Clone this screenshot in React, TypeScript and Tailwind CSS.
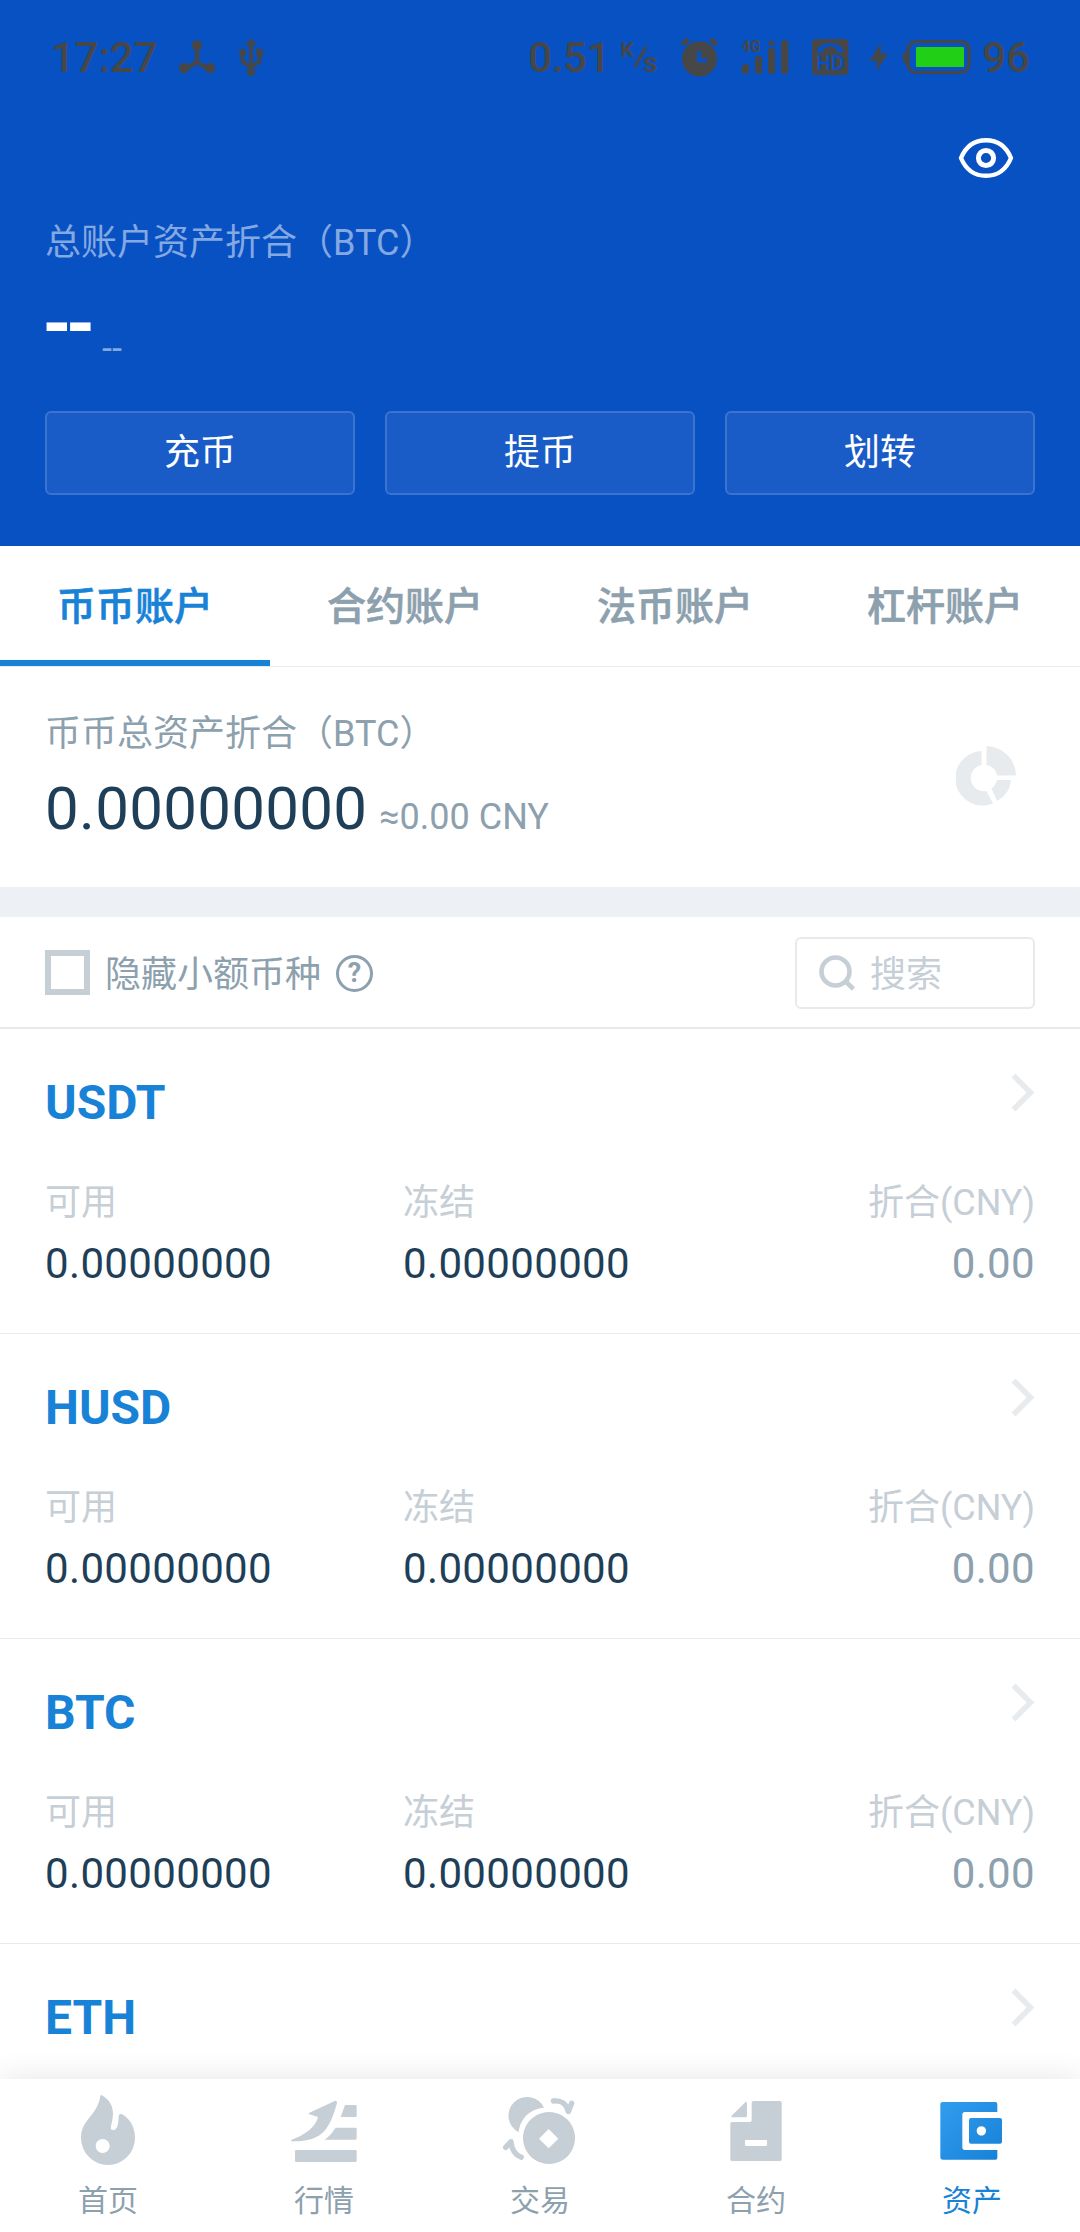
import type { ReactNode } from "react";

const INK = "#474747";

function StatusBar() {
  return (
    <div className="flex h-[116px] items-center pl-[51px] pr-[50px] text-[42px] leading-[48px] font-medium text-[#474747]">
      <span className="w-[126px]">17:27</span>
      <svg width="40" height="44" viewBox="177 36 40 44" fill={INK}>
        <path d="M197 46V62L184 70M197 62L210 70" stroke={INK} strokeWidth="4.2" fill="none" />
        <circle cx="197" cy="45.2" r="5.2" />
        <circle cx="184.2" cy="68" r="5.2" />
        <circle cx="210" cy="68" r="5.2" />
      </svg>
      <svg className="ml-[19px]" width="30" height="44" viewBox="236 36 30 44" fill={INK}>
        <path d="M251 38l6 7.500h-12z" />
        <path d="M251 42V72M242.500 53v8.500l8.500 6M259.500 53v8.500l-8.500 6" stroke={INK} strokeWidth="3.700" fill="none" />
        <circle cx="242.500" cy="52.500" r="3.600" />
        <path d="M256 49h7v6.500h-7z" />
        <circle cx="251" cy="72" r="4" />
      </svg>

      <span className="ml-auto tracking-[-0.3px]">0.51</span>
      <svg className="ml-[10px]" width="40" height="44" viewBox="620 36 40 44" fill={INK}>
        <text x="620.500" y="56.500" fontSize="21" fontWeight="700">K</text>
        <path d="M635 67L646 46.500" stroke={INK} strokeWidth="3" />
        <text x="643" y="72" fontSize="28" fontWeight="600">s</text>
      </svg>
      <svg className="ml-[19px]" width="40" height="44" viewBox="679 36 40 44" fill={INK}>
        <circle cx="699.500" cy="59" r="17.500" />
        <path d="M682.500 44.500l6-5M716.500 44.500l-6-5" stroke={INK} strokeWidth="5" />
        <path d="M699 51v9.500h8" stroke="#0851c3" strokeWidth="4" fill="none" />
      </svg>
      <svg className="ml-[21px]" width="50" height="44" viewBox="740 36 50 44" fill={INK}>
        <text x="741.500" y="52" fontSize="17" fontWeight="700" textLength="19" lengthAdjust="spacingAndGlyphs">4G</text>
        <rect x="741.700" y="64" width="7.400" height="10" rx="3.700" />
        <rect x="755" y="56" width="7" height="18" rx="3" />
        <rect x="768" y="48" width="7.200" height="26" rx="3" />
        <path d="M771.500 39l4 6.500h-8z" />
        <rect x="781" y="40" width="7.400" height="34" rx="3.500" />
      </svg>
      <svg className="ml-[21px]" width="38" height="44" viewBox="811 36 38 44" fill={INK}>
        <rect x="812" y="39" width="36.500" height="36" rx="4" />
        <path d="M817 50C820 41 840 41 843 50L842 53L837 52L836 48Q830 45 824 48L823 52L818 53z" fill="#0851c3" />
        <text x="816.500" y="70" fontSize="20.500" fontWeight="600" fill="#0851c3" textLength="28" lengthAdjust="spacingAndGlyphs">HD</text>
      </svg>
      <svg className="ml-[19px]" width="22" height="44" viewBox="868 36 22 44" fill={INK}>
        <path d="M881 43l-11.500 18h8l-1.500 10.500L888 53.500h-7.500z" />
      </svg>
      <svg className="ml-[11px]" width="71" height="44" viewBox="901 36 71 44" fill={INK}>
        <path d="M907 51.500c-6 1-6 11.500 0 12.500z" />
        <rect x="908" y="41.500" width="61" height="31" rx="8" fill="none" stroke={INK} strokeWidth="3.200" />
        <rect x="916" y="47" width="48" height="20" rx="1" fill="#21d016" />
      </svg>
      <span className="ml-[10px]">96</span>
    </div>
  );
}

function HeaderButton({ children }: { children: ReactNode }) {
  return (
    <button className="h-[84px] flex-1 rounded-[6px] border-2 border-[#3b73cf] bg-[#195cc7] pb-[1px] text-[36px] leading-[52px] text-white">
      {children}
    </button>
  );
}

function Header() {
  return (
    <header className="h-[546px] bg-[#0851c3]">
      <StatusBar />
      <div className="flex h-[83px] items-center justify-end pr-[66px]">
        <svg width="56" height="42" viewBox="0 0 56 42" fill="none" stroke="#fff">
          <path d="M3 21C8 9 17 3.200 28 3.200S48 9 53 21C48 33 39 38.800 28 38.800S8 33 3 21z" strokeWidth="4.400" strokeLinejoin="round" />
          <circle cx="28" cy="21" r="7.600" strokeWidth="5" />
        </svg>
      </div>
      <div className="mt-[18px] h-[52px] pl-[45px] text-[36px] leading-[52px] text-[#84a8e1]">总账户资产折合（BTC）</div>
      <div className="flex h-[110px] items-start pl-[44px] pt-[26px]">
        <span className="w-[43px] origin-left scale-x-110 text-[60px] font-bold leading-[60px] tracking-[-2.3px] text-white [-webkit-text-stroke:2px_white]">--</span>
        <span className="ml-[15px] pt-[28px] text-[36px] leading-[52px] text-[#84a8e1]">--</span>
      </div>
      <div className="mt-[32px] flex gap-[30px] px-[45px]">
        <HeaderButton>充币</HeaderButton>
        <HeaderButton>提币</HeaderButton>
        <HeaderButton>划转</HeaderButton>
      </div>
    </header>
  );
}

function Tabs() {
  return (
    <nav className="grid h-[121px] grid-cols-4 border-b border-[#e7eaed] text-center text-[39px] font-medium leading-[60px] text-[#8ca0ae] [-webkit-text-stroke:0.6px]">
      <div className="h-[120px] border-b-[6px] border-[#1882d7] pt-[31px] text-[#1882d7]">币币账户</div>
      <div className="pt-[31px]">合约账户</div>
      <div className="pt-[31px]">法币账户</div>
      <div className="pt-[31px]">杠杆账户</div>
    </nav>
  );
}

function Summary() {
  return (
    <section className="flex h-[220px] justify-between pl-[45px] pr-[62px]">
      <div className="pt-[41px]">
        <div className="text-[36px] leading-[52px] text-[#8ca0ae]">币币总资产折合（BTC）</div>
        <div className="mt-[14px] flex items-baseline leading-[70px]">
          <span className="text-[60px] tracking-[0.3px] text-[#1f3f59]">0.00000000</span>
          <span className="ml-[12px] text-[36px] text-[#8ca0ae]">≈0.00 CNY</span>
        </div>
      </div>
      <svg className="mt-[78px]" width="62" height="62" viewBox="956 745 62 62" fill="#e7ebee">
        <path d="M981.500 751v14a13 13 0 1 0 5 26l6.500 12.500A27.300 27.300 0 1 1 981.500 751z" />
        <path d="M986.500 746a30 30 0 0 1 29.500 29.500h-19a13.500 13.500 0 0 0-10.500-10.500z" />
        <path d="M997 780h14a26 26 0 0 1-14 21l-5.500-12.500a15 15 0 0 0 5.500-8.500z" />
      </svg>
    </section>
  );
}

function FilterBar() {
  return (
    <div className="flex h-[112px] items-center border-b-2 border-[#e7eaed] pl-[45px] pr-[45px] pt-[2px]">
      <span className="-mt-[1px] size-[45px] border-[6px] border-[#c6ced6]" />
      <span className="ml-[15px] pt-[3px] text-[36px] leading-[52px] text-[#8ca0ae]">隐藏小额币种</span>
      <span className="ml-[15px] flex size-[37px] items-center justify-center rounded-full border-[3px] border-[#8ca0ae] text-[27px] font-bold leading-[30px] text-[#8ca0ae]">
        ?
      </span>
      <div className="ml-auto flex h-[72px] w-[240px] items-center rounded-[6px] border-2 border-[#e7eaed] pl-[21px]">
        <svg width="38" height="38" viewBox="0 0 38 38" fill="none" stroke="#c6ced6" strokeWidth="4.600">
          <circle cx="17.500" cy="17.500" r="14" />
          <path d="M27 27l8.500 8" />
        </svg>
        <span className="ml-[14px] pt-[3px] text-[36px] leading-[52px] text-[#c6ced6]">搜索</span>
      </div>
    </div>
  );
}

function Amount({ label, value }: { label: string; value: string }) {
  return (
    <div>
      <div className="text-[36px] leading-[52px] text-[#c6ced6]">{label}</div>
      <div className="mt-[5px] text-[42px] leading-[60px] tracking-[0.35px]">{value}</div>
    </div>
  );
}

function CoinRow({ name, preview }: { name: string; preview?: boolean }) {
  return (
    <div className="h-[305px] shrink-0 border-b border-[#e7eaed] px-[45px] pt-[44px]">
      <div className="flex justify-between">
        <span className="text-[48px] font-bold leading-[60px] text-[#1882d7]">{name}</span>
        <svg className="-mt-[2px]" width="24" height="42" viewBox="0 0 24 42" fill="none" stroke="#e7ebee" strokeWidth="5.600">
          <path d="M2.500 4.500L19.500 21.500L2.500 38.500" />
        </svg>
      </div>
      {!preview && (
        <div className="mt-[44px] grid grid-cols-[358px_1fr_auto] text-[#1f3f59]">
          <Amount label="可用" value="0.00000000" />
          <Amount label="冻结" value="0.00000000" />
          <div className="text-right text-[#8ca0ae]">
            <Amount label="折合(CNY)" value="0.00" />
          </div>
        </div>
      )}
    </div>
  );
}

function NavItem({ label, viewBox, active, children }: { label: string; viewBox: string; active?: boolean; children: ReactNode }) {
  return (
    <div className={active ? "flex flex-col items-center pt-[11px] text-[#1882d7]" : "flex flex-col items-center pt-[11px] text-[#8ca0ae]"}>
      <svg width="80" height="78" viewBox={viewBox} fill="#c6ced6">
        {children}
      </svg>
      <span className="mt-[11px] text-[30px] leading-[44px]">{label}</span>
    </div>
  );
}

function BottomNav() {
  return (
    <nav className="relative grid h-[153px] shrink-0 grid-cols-5 bg-white shadow-[0_0_30px_rgba(0,0,0,0.110)]">
      <NavItem label="首页" viewBox="204 90 240 234">
        <path
          fillRule="evenodd"
          d="M301 107q3-4 7 0C326 118 339 136 339 160C339 178 334 192 332 204C333 212 345 212 350 203C355 194 356 180 356 168Q357 159 367 163C392 178 405 204 405 234A81 81 0 0 1 243 234C243 212 250 197 262 181C280 157 297 140 301 107zM308 237a21 21 0 1 0 .1 0z"
        />
      </NavItem>
      <NavItem label="行情" viewBox="852 90 240 234">
        <path d="M927 159L1004 123Q1011 121 1011 129C1003 156 996 182 978 207C953 239 915 245 874 244Q871 242 875 239C910 226 946 205 954 171L928 163Q924 161 927 159z" />
        <path d="M1035 135h31q4 0 4 4v28q0 4-4 4h-44zM1007 203h59q4 0 4 4v28q0 4-4 4h-92C987 229 997 218 1007 203z" />
        <rect x="885" y="270" width="185" height="36" rx="4" />
      </NavItem>
      <NavItem label="交易" viewBox="300 90 240 234">
        <path d="M356 217A56 56 0 1 1 432 143C392 146 361 173 356 217z" />
        <path fillRule="evenodd" d="M447 156a78 78 0 1 0 .1 0zM446 207l29 29-29 29-29-29z" />
        <path d="M460 123C483 120 500 131 505 155L515 130M364 292C344 284 335 269 333 245L317 262" fill="none" stroke="#c6ced6" strokeWidth="16" strokeLinecap="round" strokeLinejoin="round" />
      </NavItem>
      <NavItem label="合约" viewBox="948 90 240 234">
        <path d="M1036 127q5-3 5 3v37q0 5-5 5h-40q-5-1-1-5z" />
        <path fillRule="evenodd" d="M1061 123h79q5 0 5 5v169q0 6-5 6h-144q-5 0-5-6V191q0-5 5-5h54q5 0 5-5v-53q0-5 6-5zM1038 240q-3 0-3 3v12q0 3 3 3h60q3 0 3-3v-12q0-3-3-3z" />
      </NavItem>
      <NavItem label="资产" active viewBox="456 90 240 234">
        <defs>
          <linearGradient id="wallet" gradientUnits="userSpaceOnUse" x1="481" y1="126" x2="655" y2="299">
            <stop offset="0" stopColor="#329cef" />
            <stop offset="1" stopColor="#1882d7" />
          </linearGradient>
        </defs>
        <path fill="url(#wallet)" d="M489 126h157q6 0 6 6v24h-97q-8 0-8 8v98q0 8 8 8h97v23q0 6-6 6H489q-8 0-8-7V133q0-7 8-7z" />
        <path fill="url(#wallet)" fillRule="evenodd" d="M573 174h87q6 0 6 6v65q0 6-6 6h-87q-6 0-6-6v-65q0-6 6-6zM604 198.500a14 14 0 1 0 .1 0z" />
      </NavItem>
    </nav>
  );
}

export default function App() {
  return (
    <div className="flex h-[2232px] w-[1080px] flex-col overflow-hidden bg-white font-['Roboto','Noto_Sans_CJK_SC',sans-serif]">
      <Header />
      <Tabs />
      <Summary />
      <div className="h-[30px] bg-[#edf1f5]" />
      <FilterBar />
      <main className="flex min-h-0 flex-1 flex-col overflow-hidden">
        <CoinRow name="USDT" />
        <CoinRow name="HUSD" />
        <CoinRow name="BTC" />
        <CoinRow name="ETH" preview />
      </main>
      <BottomNav />
    </div>
  );
}
